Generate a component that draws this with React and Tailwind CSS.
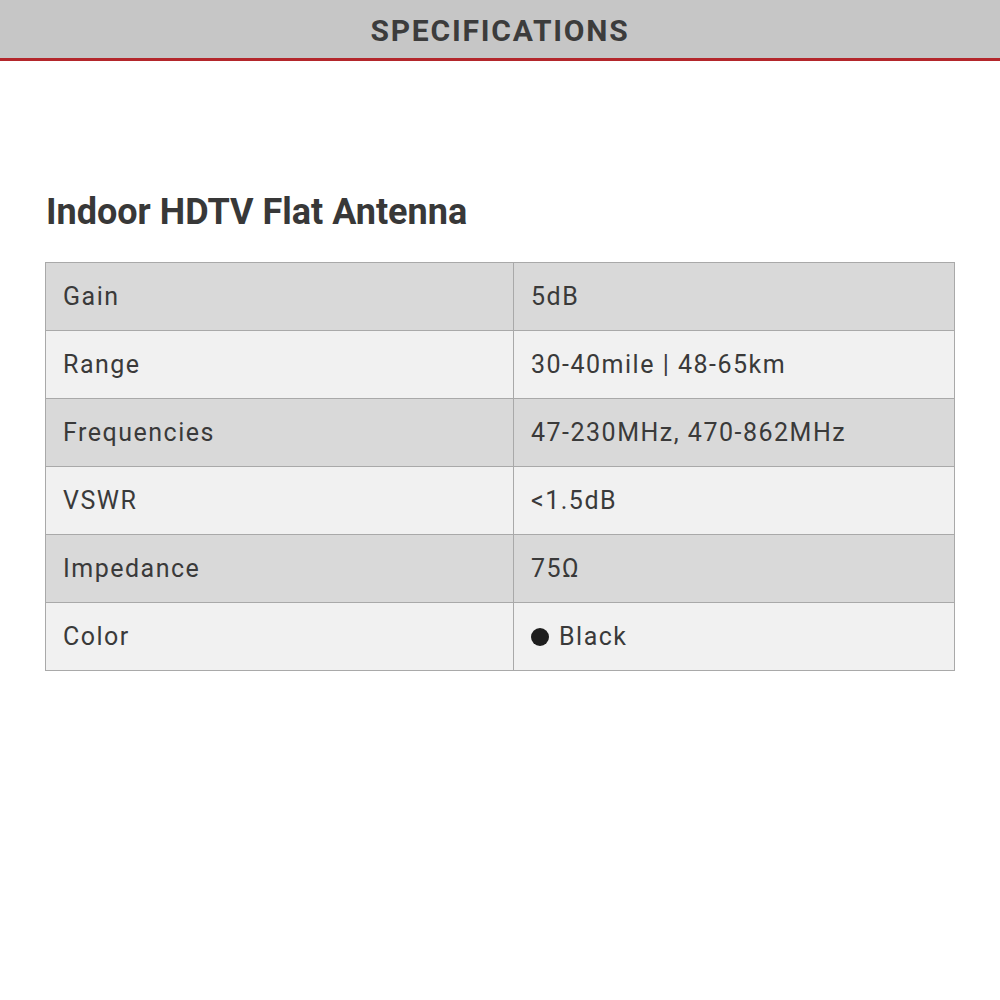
import React from 'react';

const specs = [
  { label: 'Gain', value: '5dB' },
  { label: 'Range', value: '30-40mile | 48-65km' },
  { label: 'Frequencies', value: '47-230MHz, 470-862MHz' },
  { label: 'VSWR', value: '<1.5dB' },
  { label: 'Impedance', value: '75Ω' },
  { label: 'Color', value: 'Black', dot: true },
];

export default function App() {
  return (
    <div className="w-[1000px] h-[1000px] bg-white text-[#3a3a3a]" style={{ fontFamily: 'Roboto, "Liberation Sans", sans-serif' }}>
      <div className="h-[58px] bg-[#c6c6c6] flex items-center justify-center">
        <h1 className="text-[30px] font-bold tracking-[0.06em] text-[#3c3c3c] leading-none pt-[4px]">SPECIFICATIONS</h1>
      </div>
      <div className="h-[3px] bg-[#b3262b]" />

      <div className="px-[45px] pt-[133px]">
        <h2 className="text-[36px] font-bold text-[#383838] leading-none pl-[1px]">Indoor HDTV Flat Antenna</h2>

        <table className="mt-[32px] w-[910px] border-collapse">
          <tbody>
            {specs.map((row, i) => (
              <tr key={row.label} className={i % 2 === 0 ? 'bg-[#d9d9d9]' : 'bg-[#f1f1f1]'}>
                <td className="w-[468px] h-[68px] border border-[#a9a9a9] px-[17px] text-[25px] tracking-[0.06em] leading-none">{row.label}</td>
                <td className="h-[68px] border border-[#a9a9a9] px-[17px] text-[25px] tracking-[0.06em] leading-none">
                  <span className="flex items-center gap-[10px]">
                    {row.dot && <span className="w-[18px] h-[18px] rounded-full bg-[#1e1e1e] inline-block" />}
                    {row.value}
                  </span>
                </td>
              </tr>
            ))}
          </tbody>
        </table>
      </div>
    </div>
  );
}
